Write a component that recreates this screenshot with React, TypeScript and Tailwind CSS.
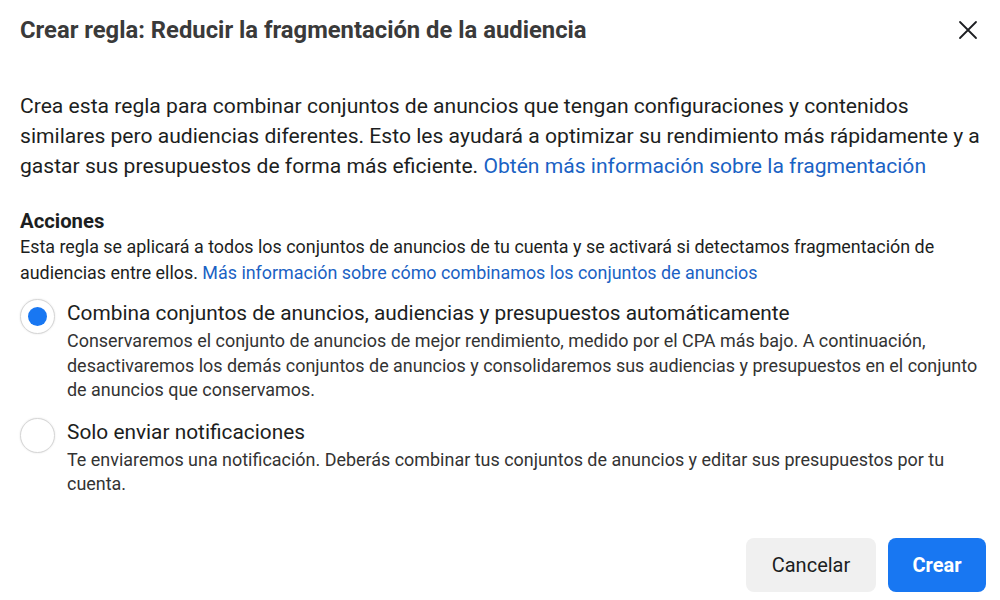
import { useState } from 'react';

const FONT = { fontFamily: 'Roboto, "Noto Sans", Arial, sans-serif' };

const OPTIONS = [
  {
    value: 'auto',
    label: 'Combina conjuntos de anuncios, audiencias y presupuestos automáticamente',
    desc: 'Conservaremos el conjunto de anuncios de mejor rendimiento, medido por el CPA más bajo. A continuación, desactivaremos los demás conjuntos de anuncios y consolidaremos sus audiencias y presupuestos en el conjunto de anuncios que conservamos.',
  },
  {
    value: 'notify',
    label: 'Solo enviar notificaciones',
    desc: 'Te enviaremos una notificación. Deberás combinar tus conjuntos de anuncios y editar sus presupuestos por tu cuenta.',
  },
];

function Radio({ checked }: { checked: boolean }) {
  return (
    <span className="w-[35px] h-[35px] shrink-0 rounded-full border border-[#d6d6d6] bg-white shadow-[0_0_2px_rgba(0,0,0,0.12)] flex items-center justify-center">
      {checked && <span className="w-[19px] h-[19px] rounded-full bg-[#1877f2]" />}
    </span>
  );
}

export default function App() {
  const [choice, setChoice] = useState('auto');

  return (
    <div className="w-[1000px] h-[600px] bg-white text-[#1c1e21] flex flex-col" style={FONT}>
      <div className="flex items-center justify-between pl-5 pr-5 pt-4">
        <h1 className="text-[23.8px] leading-[28px] font-bold text-[#3a3a3a]">
          Crear regla: Reducir la fragmentación de la audiencia
        </h1>
        <button className="w-6 h-6 flex items-center justify-center text-[#1c1e21]">
          <svg width="20" height="20" viewBox="0 0 20 20" fill="none" stroke="currentColor" strokeWidth="1.8" strokeLinecap="round">
            <path d="M2 2 L18 18 M18 2 L2 18" />
          </svg>
        </button>
      </div>

      <div className="pl-5 pr-4 mt-[47px]">
        <p className="text-[21.1px] leading-[30px] text-[#1c1e21]">
          Crea esta regla para combinar conjuntos de anuncios que tengan configuraciones y contenidos similares pero audiencias diferentes. Esto les ayudará a optimizar su rendimiento más rápidamente y a gastar sus presupuestos de forma más eficiente.{' '}
          <a className="text-[#1a62c4]">Obtén más información sobre la fragmentación</a>
        </p>

        <h2 className="mt-[28px] text-[20.3px] leading-[24px] font-bold text-[#1c1e21]">Acciones</h2>
        <p className="mt-[1px] text-[17.9px] leading-[26px] text-[#1c1e21]">
          Esta regla se aplicará a todos los conjuntos de anuncios de tu cuenta y se activará si detectamos fragmentación de audiencias entre ellos.{' '}
          <a className="text-[#1a62c4]">Más información sobre cómo combinamos los conjuntos de anuncios</a>
        </p>

        <div className="mt-[13px] flex flex-col gap-[15px]">
          {OPTIONS.map(o => (
            <label key={o.value} className="flex gap-3 cursor-pointer" onClick={() => setChoice(o.value)}>
              <Radio checked={choice === o.value} />
              <div>
                <div className="text-[20.85px] leading-[28px] text-[#1c1e21]">{o.label}</div>
                <div className="mt-[2px] text-[17.95px] leading-[24.5px] text-[#333]">{o.desc}</div>
              </div>
            </label>
          ))}
        </div>
      </div>

      <div className="mt-auto mb-2 flex justify-end gap-3 pr-[14px]">
        <button className="w-[130px] h-[54px] rounded-lg bg-[#f0f0f0] text-[20px] text-[#1c1e21]">Cancelar</button>
        <button className="w-[98px] h-[54px] rounded-lg bg-[#1877f2] text-[20px] font-bold text-white">Crear</button>
      </div>
    </div>
  );
}
